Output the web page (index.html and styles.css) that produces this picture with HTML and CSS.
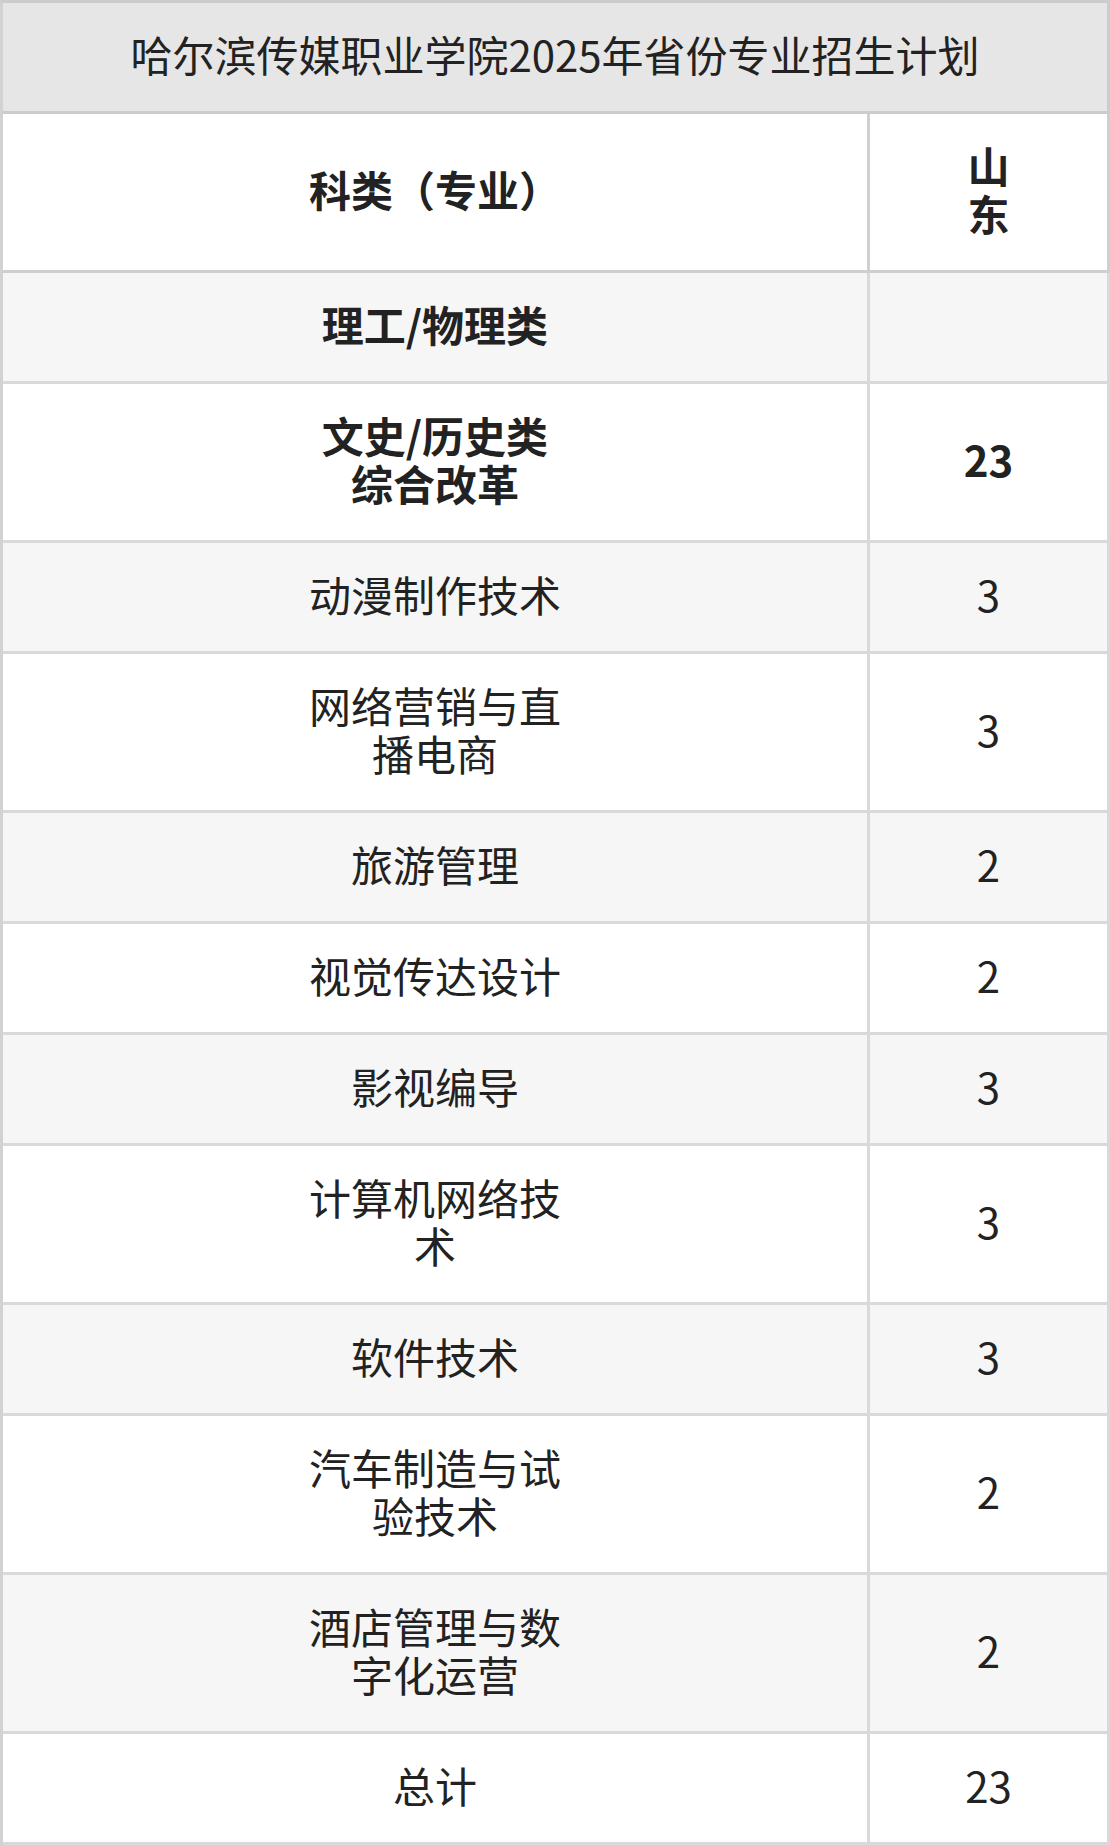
FILE: index.html
```html
<!DOCTYPE html>
<html lang="zh-CN">
<head>
<meta charset="utf-8">
<title>哈尔滨传媒职业学院2025年省份专业招生计划</title>
<link rel="stylesheet" href="styles.css">
</head>
<body>
<table class="plan">
  <colgroup>
    <col class="col-major">
    <col class="col-num">
  </colgroup>
  <thead>
    <tr class="title-row"><td colspan="2" class="title">哈尔滨传媒职业学院2025年省份专业招生计划</td></tr>
    <tr class="head-row">
      <th>科类（专业）</th>
      <th>山<br>东</th>
    </tr>
  </thead>
  <tbody>
    <tr><td class="strong">理工/物理类</td><td class="strong"></td></tr>
    <tr><td class="strong">文史/历史类<br>综合改革</td><td class="strong">23</td></tr>
    <tr><td>动漫制作技术</td><td>3</td></tr>
    <tr><td>网络营销与直<br>播电商</td><td>3</td></tr>
    <tr><td>旅游管理</td><td>2</td></tr>
    <tr><td>视觉传达设计</td><td>2</td></tr>
    <tr><td>影视编导</td><td>3</td></tr>
    <tr><td>计算机网络技<br>术</td><td>3</td></tr>
    <tr><td>软件技术</td><td>3</td></tr>
    <tr><td>汽车制造与试<br>验技术</td><td>2</td></tr>
    <tr><td>酒店管理与数<br>字化运营</td><td>2</td></tr>
    <tr><td>总计</td><td>23</td></tr>
  </tbody>
</table>
</body>
</html>
```

FILE: styles.css
```css
html, body {
  margin: 0;
  padding: 0;
  background: #ffffff;
}

body {
  font-family: "Noto Sans CJK SC", "Noto Sans", sans-serif;
  color: #222222;
}

.plan {
  width: 1110px;
  box-sizing: border-box;
  border-collapse: separate;
  border-spacing: 0;
  border-top: 3px solid #cccccc;
  border-left: 3px solid #d2d2d2;
  table-layout: fixed;
}

.col-major {
  width: 867px;
}

.col-num {
  width: 240px;
}

.plan td,
.plan th {
  padding: 27px 0 33px;
  font-size: 42px;
  line-height: 48px;
  text-align: center;
  vertical-align: middle;
  border-right: 3px solid #d9d9d9;
  border-bottom: 3px solid #d9d9d9;
  font-weight: 400;
}

.plan .title {
  background: #e6e6e6;
  border-right-color: #cccccc;
  border-bottom-color: #cccccc;
  font-weight: 400;
}

.plan .head-row th {
  font-weight: 700;
  background: #ffffff;
  border-bottom-color: #cfcfcf;
  border-right-color: #cfcfcf;
}

.plan .strong {
  font-weight: 700;
}

.plan tbody tr:nth-child(odd) td {
  background: #f6f6f6;
}

.plan tbody tr:nth-child(even) td {
  background: #ffffff;
}
```
